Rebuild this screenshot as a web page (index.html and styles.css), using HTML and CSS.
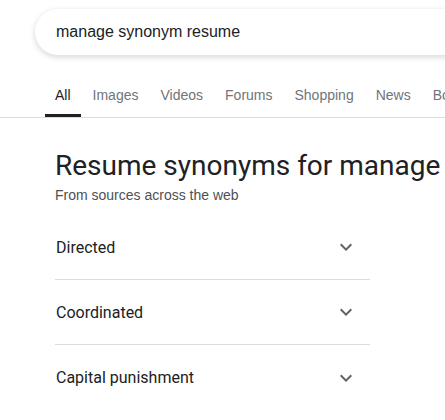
FILE: index.html
```html
<!DOCTYPE html>
<html>
<head>
<meta charset="utf-8">
<link rel="stylesheet" href="styles.css">
</head>
<body>
<header class="top">
  <div class="search">
    <span class="query">manage synonym resume</span>
  </div>
  <nav class="tabs">
    <a class="tab active">All</a>
    <a class="tab">Images</a>
    <a class="tab">Videos</a>
    <a class="tab">Forums</a>
    <a class="tab">Shopping</a>
    <a class="tab">News</a>
    <a class="tab">Books</a>
  </nav>
</header>
<main class="content">
  <h1 class="title">Resume synonyms for manage</h1>
  <p class="sub">From sources across the web</p>
  <ul class="list">
    <li class="row"><span>Directed</span><svg class="chev" viewBox="0 0 24 24"><path d="M7.41 8.59 12 13.17l4.59-4.58L18 10l-6 6-6-6z"/></svg></li>
    <li class="row"><span>Coordinated</span><svg class="chev" viewBox="0 0 24 24"><path d="M7.41 8.59 12 13.17l4.59-4.58L18 10l-6 6-6-6z"/></svg></li>
    <li class="row last"><span>Capital punishment</span><svg class="chev" viewBox="0 0 24 24"><path d="M7.41 8.59 12 13.17l4.59-4.58L18 10l-6 6-6-6z"/></svg></li>
  </ul>
</main>
</body>
</html>
```
FILE: styles.css
```css
* { box-sizing: border-box; }
html, body { margin: 0; padding: 0; background: #fff; overflow: hidden; }
body { width: 445px; height: 420px; font-family: Arial, "Liberation Sans", sans-serif; color: #202124; }

.top { border-bottom: 1px solid #dadce0; }
.search {
  margin: 9px 0 0 35px;
  width: 560px;
  height: 46px;
  border-radius: 23px;
  background: #fff;
  box-shadow: 0 2px 5px 1px rgba(64,60,67,.16);
  display: flex;
  align-items: center;
  padding-left: 21px;
}
.query { font-size: 16px; color: #202124; }

.tabs {
  display: flex;
  gap: 22px;
  margin: 25px 0 0 45px;
  white-space: nowrap;
}
.tab {
  font-size: 14px;
  color: #70757a;
  padding: 7px 0 11px;
  line-height: 16px;
  border-bottom: 3px solid transparent;
}
.tab.active {
  color: #202124;
  border-bottom-color: #202124;
  padding-left: 10px;
  padding-right: 10px;
  margin-right: -10px;
}

.content { padding-left: 55px; }
.title {
  margin: 30px 0 0;
  font-family: Roboto, "Open Sans", sans-serif;
  font-weight: 400;
  font-size: 28px;
  line-height: 36px;
  color: #202124;
  white-space: nowrap;
}
.sub {
  margin: 1px 0 0;
  font-size: 14px;
  line-height: 20px;
  color: #4d5156;
}
.list { list-style: none; margin: 10px 0 0; padding: 0; width: 315px; }
.row {
  display: flex;
  align-items: center;
  justify-content: space-between;
  height: 65px;
  border-bottom: 1px solid #dadce0;
  font-family: Roboto, sans-serif;
  font-size: 16px;
  color: #202124;
  padding-left: 1px;
  padding-right: 16px;
}
.row.last { border-bottom: 0; }
.chev { width: 24px; height: 24px; fill: #5f6368; margin-right: -4px; }
```
